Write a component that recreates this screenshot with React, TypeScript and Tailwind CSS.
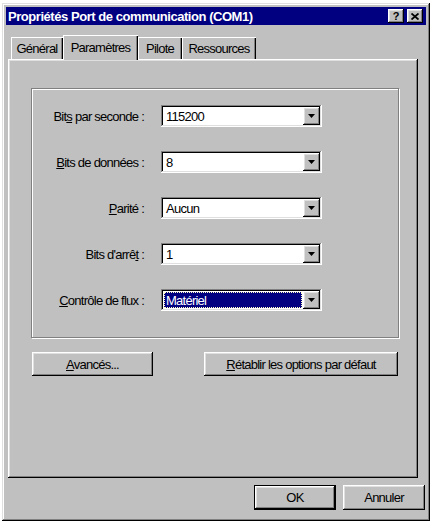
import type { ReactNode } from "react";

const raised =
  "shadow-[inset_-1px_-1px_#000,inset_1px_1px_#fff,inset_-2px_-2px_#808080,inset_2px_2px_#dfdfdf]";
const sunken =
  "shadow-[inset_-1px_-1px_#fff,inset_1px_1px_#808080,inset_-2px_-2px_#dfdfdf,inset_2px_2px_#000]";

const rows: { label: ReactNode; value: string; selected?: boolean }[] = [
  {
    label: (
      <>
        Bit<span className="underline">s</span> par seconde :
      </>
    ),
    value: "115200",
  },
  {
    label: (
      <>
        <span className="underline">B</span>its de données :
      </>
    ),
    value: "8",
  },
  {
    label: (
      <>
        <span className="underline">P</span>arité :
      </>
    ),
    value: "Aucun",
  },
  {
    label: (
      <>
        Bits d'arrê<span className="underline">t</span> :
      </>
    ),
    value: "1",
  },
  {
    label: (
      <>
        <span className="underline">C</span>ontrôle de flux :
      </>
    ),
    value: "Matériel",
    selected: true,
  },
];

const tabs = [
  { name: "Général", w: "w-[52px]" },
  { name: "Paramètres", w: "w-[75px]", active: true },
  { name: "Pilote", w: "w-[44px]" },
  { name: "Ressources", w: "w-[74px]" },
];

const DownArrow = () => (
  <svg width="7" height="4" viewBox="0 0 7 4">
    <path d="M0 0h7L3.5 4z" fill="#000" />
  </svg>
);

const Combo = ({ value, selected }: { value: string; selected?: boolean }) => (
  <div className={`flex h-[22px] w-[161px] bg-white p-[2px] ${sunken}`}>
    <div className="flex flex-1 items-center p-px">
      {selected ? (
        <div className="flex h-full flex-1 items-center border border-dotted border-[#ffffc0] bg-[#000080] pl-[1px] text-white">
          {value}
        </div>
      ) : (
        <span className="pl-[2px]">{value}</span>
      )}
    </div>
    <div className={`flex w-[17px] items-center justify-center bg-[#c0c0c0] ${raised}`}>
      <DownArrow />
    </div>
  </div>
);

const Button = ({ children, className = "" }: { children: ReactNode; className?: string }) => (
  <div className={`flex items-center justify-center bg-[#c0c0c0] ${raised} ${className}`}>{children}</div>
);

export default function App() {
  return (
    <div className="min-h-screen bg-white pl-[2px] pt-[3px] font-['Liberation_Sans',Arial,sans-serif] text-[13px] leading-none tracking-[-0.75px] text-black">
      <div className="flex h-[518px] w-[428px] flex-col bg-[#c0c0c0] p-[4px] shadow-[inset_-1px_-1px_#000,inset_1px_1px_#dfdfdf,inset_-2px_-2px_#808080,inset_2px_2px_#fff]">
        {/* Title bar */}
        <div className="flex h-[18px] items-center justify-between bg-[#000080] pl-[2px] pr-[3px]">
          <span className="text-[13px] font-bold tracking-[-0.45px] text-white">
            Propriétés Port de communication (COM1)
          </span>
          <div className="flex gap-[3px]">
            <div className={`flex h-[14px] w-[16px] items-center justify-center bg-[#c0c0c0] text-[11px] font-bold tracking-normal ${raised}`}>
              ?
            </div>
            <div className={`flex h-[14px] w-[16px] items-center justify-center bg-[#c0c0c0] ${raised}`}>
              <svg width="8" height="7" viewBox="0 0 8 7">
                <path d="M0.5 0.5l7 6M7.5 0.5l-7 6" stroke="#000" strokeWidth="1.8" />
              </svg>
            </div>
          </div>
        </div>

        {/* Tabs */}
        <div className="ml-[2px] mt-[10px] flex h-[24px] items-end pl-[3px]">
          {tabs.map((t) =>
            t.active ? (
              <div
                key={t.name}
                className={`relative z-10 -mb-px flex h-[25px] ${t.w} items-start justify-center bg-[#c0c0c0] pt-[6px] shadow-[inset_1px_1px_#fff,inset_-1px_0_#000,inset_-2px_0_#808080]`}
              >
                {t.name}
              </div>
            ) : (
              <div
                key={t.name}
                className={`flex h-[22px] ${t.w} items-center justify-center bg-[#c0c0c0] shadow-[inset_1px_1px_#fff,inset_-1px_0_#000,inset_-2px_0_#808080]`}
              >
                {t.name}
              </div>
            )
          )}
        </div>

        {/* Tab panel */}
        <div className="ml-[2px] flex h-[419px] w-[410px] flex-col shadow-[inset_-1px_-1px_#000,inset_1px_1px_#fff,inset_-2px_-2px_#808080,inset_2px_2px_#dfdfdf]">
          <div className="ml-[23px] mt-[29px] h-[250px] w-[368px] border border-[#808080] shadow-[1px_1px_0_#fff,inset_1px_1px_0_#fff]">
            <div className="flex flex-col gap-[24px] pt-[16px]">
              {rows.map((r, i) => (
                <div key={i} className="flex items-center">
                  <div className="w-[112px] text-right">{r.label}</div>
                  <div className="ml-[17px]">
                    <Combo value={r.value} selected={r.selected} />
                  </div>
                </div>
              ))}
            </div>
          </div>
          <div className="ml-[24px] mt-[14px] flex gap-[51px]">
            <Button className="h-[24px] w-[121px]">
              <span>
                <span className="underline">A</span>vancés...
              </span>
            </Button>
            <Button className="h-[24px] w-[194px]">
              <span>
                <span className="underline">R</span>établir les options par défaut
              </span>
            </Button>
          </div>
        </div>

        {/* Dialog buttons */}
        <div className="mr-[1px] mt-[7px] flex justify-end gap-[7px]">
          <div className="h-[25px] w-[82px] border border-black">
            <Button className="h-full w-full">OK</Button>
          </div>
          <Button className="h-[25px] w-[82px]">Annuler</Button>
        </div>
      </div>
    </div>
  );
}
